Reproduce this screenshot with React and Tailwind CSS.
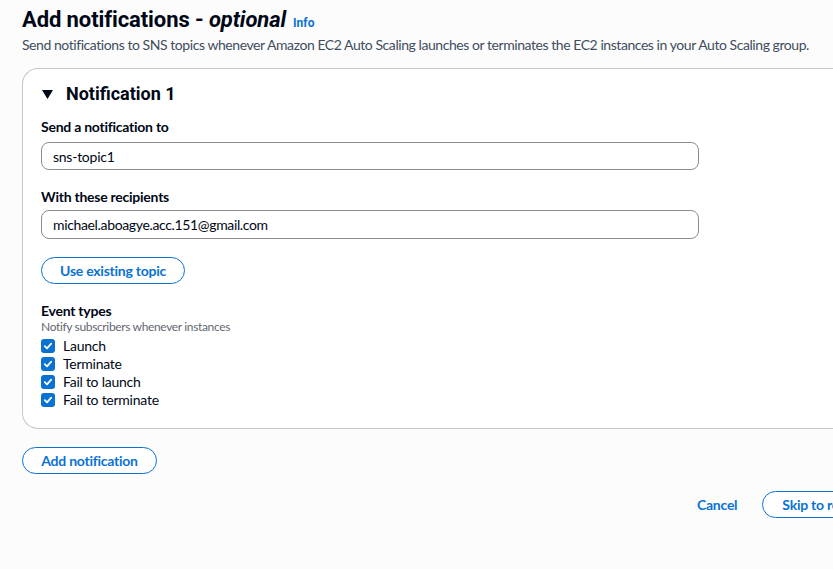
import React from "react";

function Check() {
  return (
    <span className="flex h-[14px] w-[14px] items-center justify-center rounded-[3px] bg-[#0972d3]">
      <svg width="10" height="10" viewBox="0 0 10 10" fill="none">
        <path d="M1.8 5.2 L4 7.3 L8.2 2.6" stroke="white" strokeWidth="1.8" strokeLinecap="round" strokeLinejoin="round" />
      </svg>
    </span>
  );
}

export default function App() {
  const events = ["Launch", "Terminate", "Fail to launch", "Fail to terminate"];
  return (
    <div className="h-[569px] w-[833px] overflow-hidden bg-[#fcfcfc] font-['Lato',sans-serif] text-[14px] tracking-[-0.25px] text-[#000716]">
      <div className="pl-[22px] pt-[5px]">
        <div className="flex items-baseline gap-[7px]">
          <h2 className="font-['Roboto',sans-serif] text-[22px] font-bold leading-[30px] tracking-[-0.1px]">
            Add notifications - <span className="italic font-bold">optional</span>
          </h2>
          <span className="font-['Roboto',sans-serif] text-[12px] font-bold tracking-normal text-[#0972d3]">Info</span>
        </div>
        <p className="whitespace-nowrap text-[14px] leading-[20px] tracking-[-0.44px] text-[#414d5c]">
          Send notifications to SNS topics whenever Amazon EC2 Auto Scaling launches or terminates the EC2 instances in your Auto Scaling group.
        </p>
      </div>

      <div className="ml-[22px] mt-[13px] w-[830px] rounded-l-[16px] border border-r-0 border-[#c6c6cd] bg-white pb-[19px] pl-[18px] pt-[12px]">
        <div className="flex items-center gap-[13px]">
          <svg width="11" height="9" viewBox="0 0 11 9" className="ml-[1px]">
            <path d="M0 0 H11 L5.5 9 Z" fill="#000716" />
          </svg>
          <span className="font-['Roboto',sans-serif] text-[18px] font-bold leading-[26px] tracking-normal">Notification 1</span>
        </div>

        <div className="mt-[11px] text-[14px] font-bold leading-[18px]">Send a notification to</div>
        <div className="mt-[6px] flex h-[28px] w-[658px] items-center rounded-[8px] border border-[#8c8c94] px-[11px] text-[14px]">
          sns-topic1
        </div>

        <div className="mt-[18px] text-[14px] font-bold leading-[18px]">With these recipients</div>
        <div className="mt-[4px] flex h-[29px] w-[658px] items-center rounded-[8px] border border-[#8c8c94] px-[11px] text-[14px] tracking-[-0.35px]">
          michael.aboagye.acc.151@gmail.com
        </div>

        <button className="mt-[18px] flex h-[27px] w-[144px] items-center justify-center rounded-full border-[1.5px] border-[#0972d3] text-[14px] font-bold leading-[18px] text-[#0972d3]">
          Use existing topic
        </button>

        <div className="mt-[18px] text-[14px] font-bold leading-[18px]">Event types</div>
        <div className="text-[12px] leading-[14px] tracking-[-0.35px] text-[#656871]">Notify subscribers whenever instances</div>
        <div className="mt-[3px] flex flex-col">
          {events.map((e) => (
            <label key={e} className="flex h-[18px] items-center gap-[8px] text-[14px] leading-[18px]">
              <Check />
              <span>{e}</span>
            </label>
          ))}
        </div>
      </div>

      <div className="ml-[22px] mt-[18px]">
        <button className="flex h-[27px] w-[135px] items-center justify-center rounded-full border-[1.5px] border-[#0972d3] bg-white text-[14px] font-bold leading-[18px] text-[#0972d3]">
          Add notification
        </button>
      </div>

      <div className="mt-[17px] flex items-center pl-[697px]">
        <span className="text-[14px] font-bold leading-[18px] text-[#0972d3]">Cancel</span>
        <button className="ml-[25px] flex h-[27px] w-[120px] shrink-0 items-center whitespace-nowrap rounded-full border-[1.5px] border-[#0972d3] bg-white pl-[19px] text-[14px] font-bold leading-[18px] text-[#0972d3]">
          Skip to review
        </button>
      </div>
    </div>
  );
}
